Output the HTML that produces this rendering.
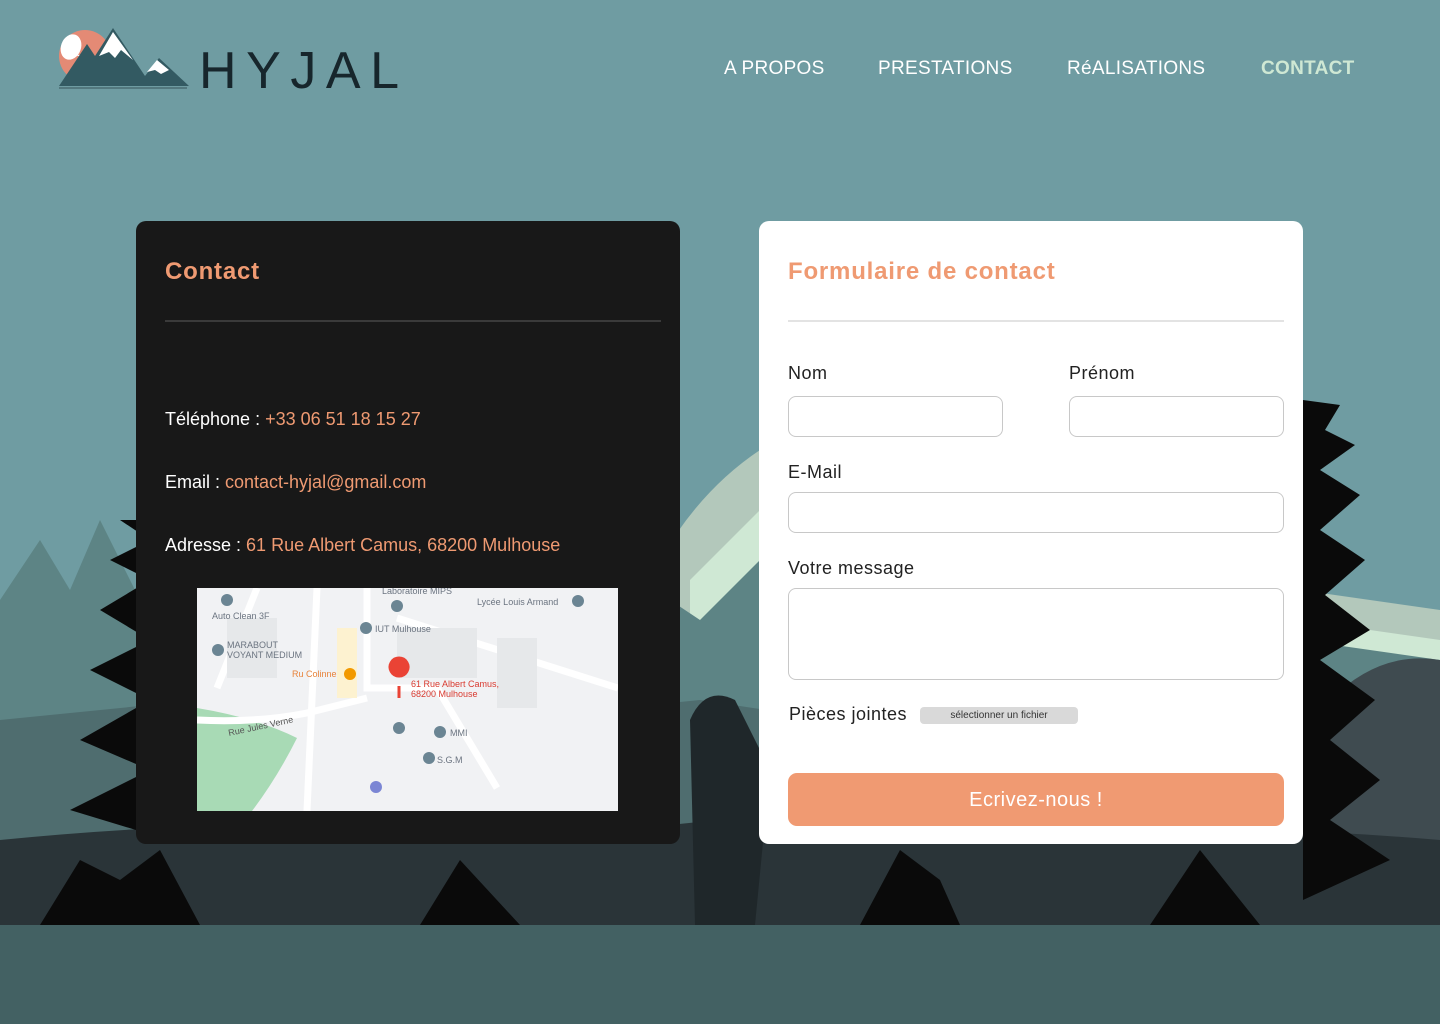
<!DOCTYPE html>
<html><head><meta charset="utf-8">
<style>
*{margin:0;padding:0;box-sizing:border-box}
body{width:1440px;height:1024px;overflow:hidden;background:#436163;font-family:"Liberation Sans","DejaVu Sans",sans-serif;position:relative}
#bg{position:absolute;left:0;top:0}
.nav{position:absolute;top:58px;font-size:19px;color:#fff;letter-spacing:0.3px}
.card{position:absolute;top:221px;height:623px;border-radius:10px}
.dark{left:136px;width:544px;background:#181818}
.white{left:759px;width:544px;background:#fff}
h2{position:absolute;left:29px;top:37px;font-size:24px;color:#ef9a72;font-weight:bold;letter-spacing:0.8px}
.hr{position:absolute;left:29px;right:19px;top:99px;height:2px;background:#3a3a3a}
.white .hr{background:#e3e3e3}
.info{position:absolute;left:29px;font-size:18px;color:#fff}
.info span{color:#ef9a72}
.lbl{position:absolute;font-size:18px;color:#222;letter-spacing:0.5px}
.inp{position:absolute;border:1px solid #c8c8c8;border-radius:8px;background:#fff}
</style></head><body>
<svg id="bg" width="1440" height="1024" viewBox="0 0 1440 1024">
<rect width="1440" height="925" fill="#6f9ca2"/>
<path d="M660 560 Q700 490 760 450 L800 430 L850 440 L950 470 L1050 510 L1150 550 L1300 590 L1440 610 L1440 925 L660 925Z" fill="#b3c8bb"/>
<path d="M690 580 L760 510 L820 480 L900 490 L1000 540 L1150 590 L1300 620 L1440 640 L1440 925 L690 925Z" fill="#cfe8d4"/>
<path d="M0 600 L40 540 L70 590 L100 520 L140 600 L180 560 L220 640 L600 640 L640 580 L700 620 L760 560 L820 640 L1000 620 L1100 660 L1200 600 L1300 640 L1440 660 L1440 925 L0 925Z" fill="#5d8485"/>
<path d="M0 720 L200 700 L500 720 L700 700 L900 730 L1100 710 L1300 710 L1440 700 L1440 925 L0 925Z" fill="#4f6d6f"/>
<path d="M1330 700 Q1380 650 1440 660 L1440 925 L1250 925 Q1260 740 1330 700Z" fill="#3f4b50"/>
<path d="M0 840 Q300 810 600 835 Q800 800 1000 835 Q1200 820 1440 840 L1440 925 L0 925Z" fill="#2a3438"/>
<path d="M40 925 L80 860 L120 880 L160 850 L200 925Z M420 925 L460 860 L520 925Z M860 925 L900 850 L940 880 L960 925Z M1150 925 L1200 850 L1260 925Z" fill="#0a0a0a"/>
<path d="M120 520 L150 540 L110 560 L150 580 L100 610 L150 640 L90 670 L150 700 L80 740 L150 770 L70 810 L136 830 L136 520Z" fill="#0a0a0a"/>
<path d="M1303 400 L1340 405 L1325 430 L1355 445 L1320 470 L1360 495 L1320 530 L1365 560 L1325 595 L1370 630 L1320 660 L1375 700 L1330 740 L1380 780 L1330 820 L1390 860 L1303 900Z" fill="#0a0a0a"/>
<path d="M690 720 Q705 685 735 700 L770 770 L755 925 L695 925 Z" fill="#1f272a"/>
<rect y="925" width="1440" height="99" fill="#436163"/>
</svg>

<svg style="position:absolute;left:57px;top:26px" width="350" height="66" viewBox="0 0 350 66">
<circle cx="28" cy="30" r="26" fill="#e48a75"/>
<ellipse cx="14" cy="21" rx="10" ry="13" fill="#fff" transform="rotate(20 14 21)"/>
<line x1="20" y1="29" x2="42" y2="36" stroke="#fff" stroke-width="1"/>
<path d="M2 60 L30 18 L38 30 L56 2 L88 50 L102 32 L132 60Z" fill="#335a62"/>
<path d="M56 6 L42 30 L52 26 L58 32 L64 24 L76 34Z" fill="#fff"/>
<path d="M100 34 L90 46 L98 44 L104 48 L112 44Z" fill="#fff"/>
<line x1="2" y1="62" x2="130" y2="62" stroke="#4a6d72" stroke-width="1.5"/>
<text x="142" y="62" font-family="Liberation Sans,sans-serif" font-size="52" fill="#17262c" textLength="200" lengthAdjust="spacing">HYJAL</text>
</svg>

<div class="nav" style="left:724px">A PROPOS</div>
<div class="nav" style="left:878px">PRESTATIONS</div>
<div class="nav" style="left:1067px">RéALISATIONS</div>
<div class="nav" style="left:1261px;color:#cfe8d4;font-weight:bold">CONTACT</div>

<div class="card dark">
<h2>Contact</h2><div class="hr"></div>
<div class="info" style="top:188px">Téléphone : <span>+33 06 51 18 15 27</span></div>
<div class="info" style="top:251px">Email : <span>contact-hyjal@gmail.com</span></div>
<div class="info" style="top:314px">Adresse : <span>61 Rue Albert Camus, 68200 Mulhouse</span></div>
<svg style="position:absolute;left:61px;top:367px" width="421" height="223" viewBox="0 0 421 223" font-family="Liberation Sans,sans-serif" font-size="9">
<rect width="421" height="223" fill="#f1f2f4"/>
<path d="M0 120 Q60 130 100 150 Q80 190 55 223 L0 223Z" fill="#a8dab5"/>
<path d="M0 132 Q60 135 110 125 L170 110 M120 0 L110 223 M170 0 L170 100 L240 100 L300 200 M200 30 L421 100 M60 0 L20 100" stroke="#fff" stroke-width="7" fill="none"/>
<rect x="30" y="30" width="50" height="60" fill="#e6e8ea"/><rect x="200" y="40" width="80" height="50" fill="#e6e8ea"/><rect x="300" y="50" width="40" height="70" fill="#e6e8ea"/><rect x="140" y="40" width="20" height="70" fill="#fdf2d0"/>
<text x="185" y="6" fill="#6b7480">Laboratoire MIPS</text>
<text x="280" y="17" fill="#6b7480">Lycée Louis Armand</text>
<text x="15" y="31" fill="#6b7480">Auto Clean 3F</text>
<text x="178" y="44" fill="#6b7480">IUT Mulhouse</text>
<text x="30" y="60" fill="#6b7480">MARABOUT</text><text x="30" y="70" fill="#6b7480">VOYANT MEDIUM</text>
<text x="95" y="89" fill="#e8833a">Ru Colinne</text>
<text x="214" y="99" fill="#d93b30">61 Rue Albert Camus,</text><text x="214" y="109" fill="#d93b30">68200 Mulhouse</text>
<text x="32" y="148" fill="#555" transform="rotate(-12 32 148)">Rue Jules Verne</text>
<text x="253" y="148" fill="#6b7480">MMI</text><text x="240" y="175" fill="#6b7480">S.G.M</text>
<path d="M202 88 a9 9 0 1 1 0.1 0 Z M202 98 L202 110" fill="#ea4335" stroke="#ea4335" stroke-width="3"/>
<circle cx="30" cy="12" r="6" fill="#6b8593"/><circle cx="200" cy="18" r="6" fill="#6b8593"/><circle cx="169" cy="40" r="6" fill="#6b8593"/><circle cx="381" cy="13" r="6" fill="#6b8593"/><circle cx="21" cy="62" r="6" fill="#6b8593"/><circle cx="153" cy="86" r="6" fill="#f29900"/><circle cx="202" cy="140" r="6" fill="#6b8593"/><circle cx="243" cy="144" r="6" fill="#6b8593"/><circle cx="232" cy="170" r="6" fill="#6b8593"/><circle cx="179" cy="199" r="6" fill="#7b86d4"/>
</svg>
</div>

<div class="card white">
<h2>Formulaire de contact</h2><div class="hr"></div>
<div class="lbl" style="left:29px;top:142px">Nom</div>
<div class="lbl" style="left:310px;top:142px">Prénom</div>
<div class="inp" style="left:29px;top:175px;width:215px;height:41px"></div>
<div class="inp" style="left:310px;top:175px;width:215px;height:41px"></div>
<div class="lbl" style="left:29px;top:241px">E-Mail</div>
<div class="inp" style="left:29px;top:271px;width:496px;height:41px"></div>
<div class="lbl" style="left:29px;top:337px">Votre message</div>
<div class="inp" style="left:29px;top:367px;width:496px;height:92px"></div>
<div class="lbl" style="left:30px;top:483px">Pièces jointes</div>
<div style="position:absolute;left:161px;top:486px;width:158px;height:17px;background:#d9d9d9;border-radius:4px;font-size:10px;color:#333;text-align:center;line-height:17px">sélectionner un fichier</div>
<div style="position:absolute;left:29px;top:552px;width:496px;height:53px;background:#f09a72;border-radius:9px;color:#fff;font-size:20px;text-align:center;line-height:55px;letter-spacing:0.5px">Ecrivez-nous !</div>
</div>
</body></html>
